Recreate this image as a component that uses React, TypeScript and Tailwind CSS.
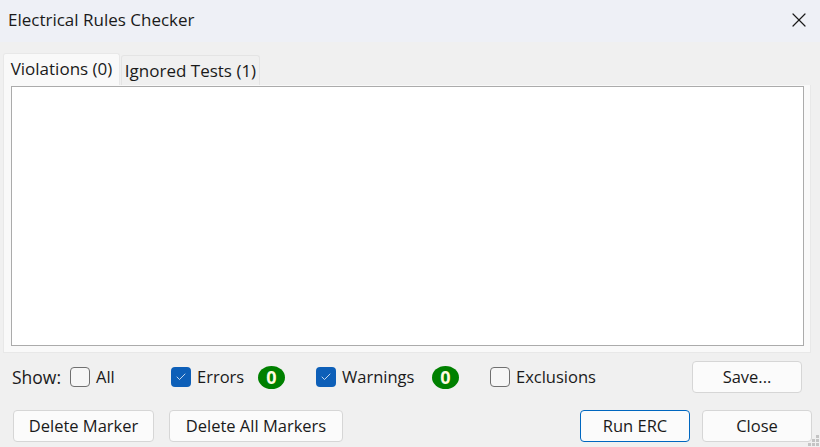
import { Check, X } from "lucide-react";

const font = { fontFamily: '"Open Sans", "Noto Sans", sans-serif' };

function CheckBox({ checked, label, className }: { checked?: boolean; label: string; className?: string }) {
  return (
    <div className={`flex items-center ${className ?? ""}`}>
      {checked ? (
        <span className="flex h-5 w-5 items-center justify-center rounded-[4px] bg-[#0d5fb8]">
          <Check className="h-3 w-3 text-white" strokeWidth={1.5} />
        </span>
      ) : (
        <span className="h-5 w-5 rounded-[4px] border border-[#707070] bg-[#f6f6f6]" />
      )}
      <span className="ml-[6px] whitespace-nowrap">{label}</span>
    </div>
  );
}

function Count({ className }: { className?: string }) {
  return (
    <span className={`flex h-[23px] w-[27px] items-center justify-center rounded-[50%] bg-[#008000] text-[18px] font-bold text-[#fffbe0] ${className ?? ""}`}>
      0
    </span>
  );
}

function Btn({ label, primary, className }: { label: string; primary?: boolean; className?: string }) {
  return (
    <button
      className={`flex h-8 items-center justify-center rounded-[4px] border bg-[#fbfbfb] ${primary ? "border-[#0067c0]" : "border-[#d6d6d6]"} ${className ?? ""}`}
    >
      {label}
    </button>
  );
}

export default function App() {
  return (
    <div className="relative flex h-[447px] w-[820px] flex-col overflow-hidden bg-[#f0f0f0] text-[16.5px] text-[#1a1a1a]" style={font}>
      {/* Title bar */}
      <div className="flex h-[42px] items-center justify-between bg-[#eef0f6] pb-[2px] pl-2 pr-[9px]">
        <span className="text-[17px]">Electrical Rules Checker</span>
        <X className="h-6 w-6 text-[#1a1a1a]" strokeWidth={1.2} />
      </div>

      {/* Tabs */}
      <div className="mt-[11px] flex h-8 items-end pl-[3px] text-[17px]">
        <div className="flex h-8 w-[117px] items-center justify-center rounded-t-[3px] border border-b-0 border-[#e8e8e8] bg-[#f9f9f9] pb-[2px]">
          Violations (0)
        </div>
        <div className="ml-px flex h-[30px] w-[139px] items-center justify-center rounded-t-[3px] border border-b-0 border-[#e4e4e4] bg-[#f0f0f0]">
          Ignored Tests (1)
        </div>
      </div>

      {/* Tab panel */}
      <div className="ml-[3px] h-[268px] w-[808px] border border-t-0 border-[#e8e8e8] bg-[#f9f9f9] pl-[7px]">
        <div className="mt-px h-[260px] w-[793px] border border-[#ababab] bg-white" />
      </div>

      {/* Filters */}
      <div className="mt-2 flex h-8 items-center pl-3">
        <span className="w-[58px] text-[17.5px]">Show:</span>
        <CheckBox label="All" className="w-[101px]" />
        <CheckBox checked label="Errors" className="w-[87px]" />
        <Count />
        <CheckBox checked label="Warnings" className="ml-[31px] w-[116px]" />
        <Count />
        <CheckBox label="Exclusions" className="ml-[31px] w-[202px]" />
        <Btn label="Save..." className="w-[110px]" />
      </div>

      {/* Buttons */}
      <div className="mt-[17px] flex pl-[13px]">
        <Btn label="Delete Marker" className="w-[141px]" />
        <Btn label="Delete All Markers" className="ml-[15px] w-[174px]" />
        <Btn label="Run ERC" primary className="ml-[237px] w-[110px]" />
        <Btn label="Close" className="ml-3 w-[110px]" />
      </div>

      {/* Resize grip */}
      <svg className="absolute bottom-0 right-0 h-3 w-3" viewBox="0 0 12 12" fill="#c4c4c4">
        <rect x="8" y="0" width="3" height="3" />
        <rect x="4" y="4" width="3" height="3" />
        <rect x="8" y="4" width="3" height="3" />
        <rect x="0" y="8" width="3" height="3" />
        <rect x="4" y="8" width="3" height="3" />
        <rect x="8" y="8" width="3" height="3" />
      </svg>
    </div>
  );
}
